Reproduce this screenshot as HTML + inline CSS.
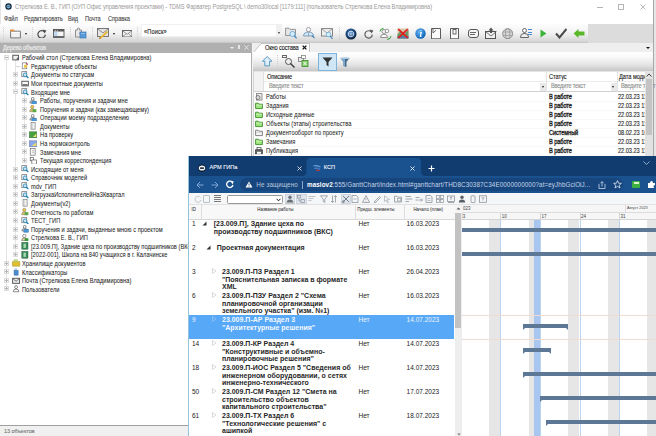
<!DOCTYPE html><html><head><meta charset="utf-8"><style>
*{margin:0;padding:0;box-sizing:border-box}
html,body{width:656px;height:436px;overflow:hidden;background:#fff;font-family:"Liberation Sans",sans-serif}
.ab{position:absolute}
.t{position:absolute;white-space:nowrap;line-height:1}
.ui{font-size:6.5px;letter-spacing:-0.04px;color:#222;-webkit-text-stroke:0.1px currentColor;transform:scaleX(0.87);transform-origin:0 0}
.g{font-size:7px;font-weight:bold;color:#262626;letter-spacing:0}
.gr{font-size:6.5px;color:#222}

</style></head><body>
<div class="ab" style="left:0;top:0;width:656px;height:13px;background:#fff"></div>
<svg class="ab" style="left:4.5px;top:3.2px" width="7" height="7"><circle cx="3.5" cy="3.5" r="3.2" fill="#0e2438"/><circle cx="3.5" cy="3.4" r="2" fill="#7aaed0"/><path d="M1.8 3.4H5.2" stroke="#1e4a6a" stroke-width="0.6"/></svg>
<div class="ab" style="left:0;top:0;width:1px;height:24px;background:#e4e4e4"></div>
<div class="t ui" style="left:14.8px;top:3.9px;color:#999999;-webkit-text-stroke:0;letter-spacing:-0.062px">Стрелкова Е. В., ГИП (ОУП Офис управления проектами) - TDMS Фарватер PostgreSQL \ demo30local [1179:111] (пользователь Стрелкова Елена Владимировна)</div>
<div class="ab" style="left:597px;top:6.5px;width:6px;height:1px;background:#b4b4b4"></div>
<div class="ab" style="left:618px;top:4px;width:6px;height:6px;border:1px solid #b4b4b4"></div>
<svg class="ab" style="left:640px;top:4px" width="6" height="6"><path d="M0.5 0.5L5.5 5.5M5.5 0.5L0.5 5.5" stroke="#b4b4b4" stroke-width="0.9"/></svg>
<div class="t ui" style="left:4.4px;top:16px;color:#444">Файл</div>
<div class="t ui" style="left:24.4px;top:16px;color:#444">Редактировать</div>
<div class="t ui" style="left:68.3px;top:16px;color:#444">Вид</div>
<div class="t ui" style="left:85.4px;top:16px;color:#444">Почта</div>
<div class="t ui" style="left:107.8px;top:16px;color:#444">Справка</div>
<div class="ab" style="left:0;top:23.6px;width:656px;height:19.4px;background:#dcdcdc"></div>
<div class="ab" style="left:0;top:23.6px;width:588px;height:19.4px;background:linear-gradient(#fdfdfd,#f2f2f2 50%,#d4d4d4);border-bottom:1px solid #c8c8c8"></div>
<div class="ab" style="left:2.8px;top:27px;width:1px;height:13px;border-left:1px dotted #d0d0d0"></div>
<div class="ab" style="left:32px;top:27px;width:1px;height:13px;border-left:1px dotted #d0d0d0"></div>
<div class="ab" style="left:70px;top:27px;width:1px;height:13px;border-left:1px dotted #d0d0d0"></div>
<div class="ab" style="left:91.5px;top:27px;width:1px;height:13px;border-left:1px dotted #d0d0d0"></div>
<div class="ab" style="left:137px;top:27px;width:1px;height:13px;border-left:1px dotted #d0d0d0"></div>
<div class="ab" style="left:338.6px;top:27px;width:1px;height:13px;border-left:1px dotted #d0d0d0"></div>
<div class="ab" style="left:141.2px;top:23.8px;width:140.5px;height:13px;background:#fff;border:1px solid #f0f0f0"></div>
<div class="t ui" style="left:143.6px;top:29.2px;color:#222;letter-spacing:0.15px">«Поиск»</div>
<div class="ab" style="left:276px;top:24.5px;width:6px;height:12px;background:#f0f0f0"></div>
<div class="ab" style="left:277.5px;top:32px;width:0;height:0;border-left:1.5px solid transparent;border-right:1.5px solid transparent;border-top:2px solid #333"></div>
<svg class="ab" style="left:9.5px;top:29px" width="11" height="9.5"><path d="M0.6 2.2H10.4V8.9H0.6z" fill="#f2f2f2" stroke="#6a6a6a" stroke-width="0.9"/><path d="M0.6 2.5V0.9H3.6L4.6 2.2" fill="#f0a050" stroke="#e08838" stroke-width="0.9"/><path d="M1 3.4H10" stroke="#fff" stroke-width="0.8"/></svg>
<div class="ab" style="left:24.9px;top:32.5px;width:0;height:0;border-left:1.5px solid transparent;border-right:1.5px solid transparent;border-top:2px solid #222"></div>
<svg class="ab" style="left:37px;top:28.8px" width="10" height="9.5"><path d="M7.6 3.2A3.7 3.7 0 1 0 8.3 5.6" fill="none" stroke="#4a4a4a" stroke-width="1.2"/><path d="M5.6 0.4L9.4 1.6L7.6 4.6z" fill="#4a4a4a"/></svg>
<svg class="ab" style="left:53px;top:29.2px" width="11.5" height="9"><rect x="0.5" y="0.5" width="10.5" height="8" fill="#f4f4f4" stroke="#555" stroke-width="0.9"/><rect x="0.5" y="0.5" width="10.5" height="2" fill="#555"/><rect x="1.3" y="2.5" width="3" height="5" fill="#b8d4ee"/><rect x="0.5" y="7" width="10.5" height="1.5" fill="#6a6a6a"/><path d="M2 1.5H3M4 1.5H5" stroke="#ddd" stroke-width="0.7"/></svg>
<svg class="ab" style="left:75px;top:27.3px" width="11.5" height="11.5"><path d="M0.5 3H2.5V1.5Q3.5 0.3 4.5 1.5V3H6.5V5.5H5Q4 6.5 5 7.5H6.5V10H0.5z" fill="#e8e8e8" stroke="#7a7a7a" stroke-width="0.8"/><rect x="5" y="5" width="6" height="6" fill="#5a9ad8" stroke="#3a78b8" stroke-width="0.7"/><path d="M6 6.5H10" stroke="#a8ccf0" stroke-width="0.7"/></svg>
<svg class="ab" style="left:96.5px;top:27.5px" width="12.5" height="11.5"><rect x="0.5" y="0.5" width="11" height="8" fill="#e4e4e4" stroke="#6a6a6a" stroke-width="0.9"/><path d="M0.8 0.8L6 5L11.2 0.8" fill="none" stroke="#777" stroke-width="0.8"/><path d="M2.5 10.8L10.5 3.5" stroke="#e8b830" stroke-width="1.8"/><path d="M2.5 10.8L3.3 9" stroke="#8a6a20" stroke-width="0.8"/></svg>
<div class="ab" style="left:112.7px;top:32.5px;width:0;height:0;border-left:1.5px solid transparent;border-right:1.5px solid transparent;border-top:2px solid #222"></div>
<svg class="ab" style="left:121.5px;top:29.7px" width="10.5" height="7.5"><rect x="0.5" y="0.5" width="9.5" height="6.5" fill="#f2f2f2" stroke="#5a5a5a" stroke-width="0.9"/><path d="M0.6 0.8L5.2 4.3L9.9 0.8M0.8 6.8L3.8 3.8M9.7 6.8L6.6 3.8" fill="none" stroke="#6a6a6a" stroke-width="0.7"/></svg>
<svg class="ab" style="left:284.5px;top:27px" width="13" height="12"><path d="M0.6 1.2H4L5 2.4H10.5V8.5H0.6z" fill="#e6e6e6" stroke="#8a8a8a" stroke-width="0.9"/><circle cx="7.5" cy="7" r="2.6" fill="#d4ecfa" stroke="#6aaad8" stroke-width="0.9"/><path d="M9.3 8.8L11.6 11.2" stroke="#4a88c0" stroke-width="1.3"/></svg>
<svg class="ab" style="left:303px;top:27px" width="13" height="12"><circle cx="5.5" cy="2.6" r="2.1" fill="#fafafa" stroke="#8a8a8a" stroke-width="0.8"/><path d="M0.6 9Q0.6 5 5.5 5Q10.4 5 10.4 9z" fill="#cfe6f6" stroke="#6a8aa8" stroke-width="0.8"/><path d="M5.5 5.5V9" stroke="#6a8aa8" stroke-width="0.6"/><path d="M9 8.5L11.5 11" stroke="#4a88c0" stroke-width="1.2"/></svg>
<svg class="ab" style="left:320.5px;top:27.5px" width="13" height="11.5"><rect x="0.5" y="0.6" width="11" height="7.5" fill="#eeeeee" stroke="#7a7a7a" stroke-width="0.9"/><path d="M0.8 0.9L6 5L11.2 0.9" fill="none" stroke="#8a8a8a" stroke-width="0.8"/><circle cx="7.5" cy="6.5" r="2.3" fill="#d4ecfa" stroke="#6aaad8" stroke-width="0.8"/><path d="M9.2 8.2L11.5 10.8" stroke="#4a88c0" stroke-width="1.2"/></svg>
<svg class="ab" style="left:344.5px;top:27.5px" width="12" height="12"><defs><radialGradient id="gd" cx="45%" cy="40%" r="60%"><stop offset="0" stop-color="#4a8ad0"/><stop offset="0.6" stop-color="#1a4a80"/><stop offset="1" stop-color="#0a1a30"/></radialGradient></defs><circle cx="6" cy="6" r="5.5" fill="url(#gd)"/><circle cx="6" cy="6" r="2.8" fill="none" stroke="#e8f0f8" stroke-width="0.8"/><path d="M3.2 6H8.8M6 3.2V8.8" stroke="#e8f0f8" stroke-width="0.6"/></svg>
<svg class="ab" style="left:363.5px;top:28.5px" width="10" height="10"><path d="M7.6 3.2A3.7 3.7 0 1 0 8.3 5.6" fill="none" stroke="#555" stroke-width="1.1"/><path d="M5.6 0.4L9.4 1.6L7.6 4.6z" fill="#555"/></svg>
<svg class="ab" style="left:379px;top:27.5px" width="13" height="12"><circle cx="5" cy="3.5" r="2" fill="#fafafa" stroke="#777" stroke-width="0.8"/><path d="M1.5 9.5Q1.5 6.2 5 6.2Q8.5 6.2 8.5 9.5z" fill="#fafafa" stroke="#777" stroke-width="0.8"/><circle cx="8" cy="3" r="1.8" fill="#fafafa" stroke="#777" stroke-width="0.7"/><path d="M1 3.5Q1 0.8 4 0.6" fill="none" stroke="#3aa03a" stroke-width="1"/><path d="M12 8Q12 11 8.5 11.3" fill="none" stroke="#3aa03a" stroke-width="1"/><path d="M3.5 0L5 0.7L3.6 1.6z" fill="#3aa03a"/><path d="M9.5 10.4L8 11.3L9.4 12z" fill="#3aa03a"/></svg>
<svg class="ab" style="left:396.5px;top:27.5px" width="12" height="11.5"><rect x="0.5" y="0.5" width="11" height="10" fill="#d8c8a8"/><path d="M0.5 6L4 3L7 6L11.5 2V10.5H0.5z" fill="#6a9a6a"/><path d="M0.5 8L11.5 8V10.5H0.5z" fill="#5a7aa8"/><path d="M1.2 1.2L10.8 9.8M10.8 1.2L1.2 9.8" stroke="#e02020" stroke-width="1.8"/></svg>
<svg class="ab" style="left:414.5px;top:27.8px" width="11" height="11"><defs><radialGradient id="gi" cx="40%" cy="35%" r="65%"><stop offset="0" stop-color="#6ab8f4"/><stop offset="1" stop-color="#0a62b8"/></radialGradient></defs><circle cx="5.5" cy="5.5" r="5.2" fill="url(#gi)"/><path d="M6 2.2V2.9M5.2 4.5H6.2L5.4 8.5H6.5" fill="none" stroke="#fff" stroke-width="1.2"/></svg>
<svg class="ab" style="left:431px;top:27.5px" width="10.5" height="11.5"><path d="M0.5 0.5H9.5V10.8H0.5z" fill="#fafafa" stroke="#4a4a4a" stroke-width="0.9"/><path d="M2 0.5V5L5 2.2" fill="none" stroke="#4a4a4a" stroke-width="0.8"/></svg>
<svg class="ab" style="left:449.5px;top:27.5px" width="9.5" height="11.5"><path d="M0.5 0.5H8.5V10.8H0.5z" fill="#fafafa" stroke="#4a4a4a" stroke-width="0.9"/><rect x="3" y="1.5" width="3" height="4.5" fill="#fff" stroke="#4a4a4a" stroke-width="0.8"/></svg>
<div class="ab" style="left:467.5px;top:29px;width:11px;height:9px;background:#f6f6f6;border:1px solid #555;border-radius:3px"></div>
<div class="ab" style="left:470px;top:32px;width:6px;height:1px;background:#666"></div><div class="ab" style="left:470px;top:34px;width:5px;height:1px;background:#666"></div>
<div class="ab" style="left:484.5px;top:31px;width:11px;height:8px;background:#f0f0f0;border:1px solid #555;border-radius:0px"></div>
<svg class="ab" style="left:484.5px;top:27px" width="12" height="12"><path d="M0.5 4.5L6 9L11.5 4.5" fill="none" stroke="#555" stroke-width="0.8"/><path d="M6 0.5L3.5 3.5H5V6H7V3.5H8.5z" fill="#555"/></svg>
<svg class="ab" style="left:502px;top:27.8px" width="11.5" height="11.5"><circle cx="5.7" cy="5.7" r="5" fill="#d8d8d8" stroke="#8a8a8a" stroke-width="0.9"/><ellipse cx="5.7" cy="5.7" rx="2.2" ry="5" fill="none" stroke="#8a8a8a" stroke-width="0.7"/><path d="M0.8 4H10.6M0.8 7.4H10.6" stroke="#8a8a8a" stroke-width="0.6"/></svg>
<div class="ab" style="left:522px;top:28px;width:5px;height:5px;border:1px solid #666;border-radius:50%;background:#fff"></div>
<div class="ab" style="left:520px;top:33px;width:9px;height:5px;border:1px solid #666;border-radius:4px 4px 0 0;background:#eee"></div>
<div class="ab" style="left:528px;top:29px;width:4px;height:8px;background:repeating-linear-gradient(#4a8ad0 0,#4a8ad0 1px,transparent 1px,transparent 2.5px)"></div>
<svg class="ab" style="left:540px;top:29px" width="7" height="9"><path d="M0.5 0.5L6.5 4.5L0.5 8.5z" fill="#3cb43c"/></svg>
<svg class="ab" style="left:555px;top:28px" width="12" height="11"><path d="M1 5.5L4.5 9.5L11.5 1" fill="none" stroke="#4a4a4a" stroke-width="2"/></svg>
<svg class="ab" style="left:572.5px;top:28px" width="12" height="11"><path d="M0.5 5.5L5.5 1V3.5H11.5V7.5H5.5V10z" fill="#58b82a"/></svg>
<div class="ab" style="left:0;top:43px;width:251.5px;height:9.5px;background:#b0b0b0"></div>
<div class="t ui" style="left:2.5px;top:44.6px;color:#f0f0f0;letter-spacing:-0.17px;-webkit-text-stroke:0.15px #f0f0f0">Дерево объектов</div>
<div class="ab" style="left:229.5px;top:46.5px;width:0;height:0;border-left:2px solid transparent;border-right:2px solid transparent;border-top:2.5px solid #eee"></div>
<div class="ab" style="left:238px;top:45px;width:2px;height:4px;border:1px solid #e6e6e6;border-top:none"></div>
<svg class="ab" style="left:244px;top:45px" width="5" height="5"><path d="M0.5 0.5L4.5 4.5M4.5 0.5L0.5 4.5" stroke="#eee" stroke-width="0.8"/></svg>
<div class="ab" style="left:0;top:425px;width:188px;height:11px;background:#f0f0f0;border-top:1px solid #a0a0a0"></div>
<div class="t ui" style="left:4px;top:428.5px;font-size:5.5px;color:#777;transform:none">13 объектов</div>
<div class="ab" style="left:5.8px;top:60px;width:1px;height:229px;background:#e4e4e4"></div>
<div class="ab" style="left:15.1px;top:60px;width:1px;height:194px;background:#e4e4e4"></div>
<div class="ab" style="left:24.4px;top:94px;width:1px;height:66px;background:#e6e6e6"></div>
<div class="ab" style="left:3.7px;top:55.1px;width:5px;height:5px;border:1px solid #dcdcdc;background:#f6f6f6"></div>
<div class="ab" style="left:4.7px;top:57.1px;width:3px;height:1px;background:#b4b4b4"></div>
<svg class="ab" style="left:12.4px;top:53.800000000000004px" width="8.2" height="7.6" viewBox="0 0 10 9" preserveAspectRatio="none"><rect x="1" y="1.5" width="7" height="5.5" fill="#f2f2f2" stroke="#505050" stroke-width="1.1"/><path d="M5 6.5L7.5 3.5V6.5z" fill="#505050"/></svg>
<div class="t ui" style="left:22px;top:55.25px;color:#202020;-webkit-text-stroke:0.04px #202020;letter-spacing:0.05px">Рабочий стол (Стрелкова Елена Владимировна)</div>
<div class="ab" style="left:15.3px;top:65.67px;width:5px;height:1px;background:#d8d8d8"></div>
<svg class="ab" style="left:20.500000000000004px;top:62.370000000000005px" width="8.2" height="7.6" viewBox="0 0 10 9" preserveAspectRatio="none"><rect x="1.5" y="1" width="5.5" height="7" fill="#fff" stroke="#777" stroke-width="0.8"/><circle cx="5.5" cy="5" r="2" fill="#e8c840"/><path d="M6 1L8.5 3" stroke="#b04070" stroke-width="1.2"/></svg>
<div class="t ui" style="left:31px;top:63.82px;color:#202020;-webkit-text-stroke:0.04px #202020;letter-spacing:0.05px">Редактируемые объекты</div>
<div class="ab" style="left:13.0px;top:72.24000000000001px;width:5px;height:5px;border:1px solid #dcdcdc;background:#f6f6f6"></div>
<div class="ab" style="left:14.0px;top:74.24000000000001px;width:3px;height:1px;background:#b4b4b4"></div>
<div class="ab" style="left:15.0px;top:73.24000000000001px;width:1px;height:3px;background:#b4b4b4"></div>
<svg class="ab" style="left:20.500000000000004px;top:70.94000000000001px" width="8.2" height="7.6" viewBox="0 0 10 9" preserveAspectRatio="none"><rect x="1" y="0.8" width="6" height="6" fill="#f4f4f4" stroke="#666" stroke-width="0.8"/><circle cx="5" cy="4.5" r="2.2" fill="#c8e4f4" stroke="#2a8ab8" stroke-width="1"/><path d="M6.5 6L9 8.5" stroke="#1a7aa8" stroke-width="1.5"/></svg>
<div class="t ui" style="left:31px;top:72.39000000000001px;color:#202020;-webkit-text-stroke:0.04px #202020;letter-spacing:0.05px">Документы по статусам</div>
<div class="ab" style="left:13.0px;top:80.81px;width:5px;height:5px;border:1px solid #dcdcdc;background:#f6f6f6"></div>
<div class="ab" style="left:14.0px;top:82.81px;width:3px;height:1px;background:#b4b4b4"></div>
<div class="ab" style="left:15.0px;top:81.81px;width:1px;height:3px;background:#b4b4b4"></div>
<svg class="ab" style="left:20.500000000000004px;top:79.51px" width="8.2" height="7.6" viewBox="0 0 10 9" preserveAspectRatio="none"><rect x="1" y="1.5" width="8" height="5.5" fill="#fafafa" stroke="#505050" stroke-width="1.1"/><rect x="2" y="5" width="6" height="1.5" fill="#505050"/></svg>
<div class="t ui" style="left:31px;top:80.96000000000001px;color:#202020;-webkit-text-stroke:0.04px #202020;letter-spacing:0.05px">Мои проектные документы</div>
<div class="ab" style="left:13.0px;top:89.38px;width:5px;height:5px;border:1px solid #dcdcdc;background:#f6f6f6"></div>
<div class="ab" style="left:14.0px;top:91.38px;width:3px;height:1px;background:#b4b4b4"></div>
<svg class="ab" style="left:20.500000000000004px;top:88.08px" width="8.2" height="7.6" viewBox="0 0 10 9" preserveAspectRatio="none"><rect x="1" y="0.8" width="6" height="6" fill="#f4f4f4" stroke="#666" stroke-width="0.8"/><circle cx="5" cy="4.5" r="2.2" fill="#c8e4f4" stroke="#2a8ab8" stroke-width="1"/><path d="M6.5 6L9 8.5" stroke="#1a7aa8" stroke-width="1.5"/></svg>
<div class="t ui" style="left:31px;top:89.53px;color:#202020;-webkit-text-stroke:0.04px #202020;letter-spacing:0.05px">Входящие мне</div>
<div class="ab" style="left:22.3px;top:97.95px;width:5px;height:5px;border:1px solid #dcdcdc;background:#f6f6f6"></div>
<div class="ab" style="left:23.3px;top:99.95px;width:3px;height:1px;background:#b4b4b4"></div>
<div class="ab" style="left:24.3px;top:98.95px;width:1px;height:3px;background:#b4b4b4"></div>
<svg class="ab" style="left:29.3px;top:96.65px" width="8.2" height="7.6" viewBox="0 0 10 9" preserveAspectRatio="none"><circle cx="4.5" cy="2.2" r="1.7" fill="#fff" stroke="#555" stroke-width="0.8"/><path d="M1 7Q1 4 4.5 4Q8 4 8 7z" fill="#fff" stroke="#555" stroke-width="0.8"/><rect x="3.5" y="5" width="5.5" height="3.5" fill="#4a9ad8" stroke="#2a6aa8" stroke-width="0.6"/></svg>
<div class="t ui" style="left:40px;top:98.10000000000001px;color:#202020;-webkit-text-stroke:0.04px #202020;letter-spacing:0.05px">Работы, поручения и задачи мне</div>
<div class="ab" style="left:22.3px;top:106.52000000000001px;width:5px;height:5px;border:1px solid #dcdcdc;background:#f6f6f6"></div>
<div class="ab" style="left:23.3px;top:108.52000000000001px;width:3px;height:1px;background:#b4b4b4"></div>
<div class="ab" style="left:24.3px;top:107.52000000000001px;width:1px;height:3px;background:#b4b4b4"></div>
<svg class="ab" style="left:29.3px;top:105.22000000000001px" width="8.2" height="7.6" viewBox="0 0 10 9" preserveAspectRatio="none"><circle cx="4" cy="2.3" r="2" fill="#f0c040" stroke="#777" stroke-width="0.6"/><path d="M0.8 8Q0.8 4.5 4 4.5Q7.5 4.5 7.5 8z" fill="#d8c060" stroke="#777" stroke-width="0.6"/><rect x="4.5" y="5" width="4.5" height="3.5" fill="#58a848"/></svg>
<div class="t ui" style="left:40px;top:106.67000000000002px;color:#202020;-webkit-text-stroke:0.04px #202020;letter-spacing:0.05px">Поручения и задачи (как замещающему)</div>
<div class="ab" style="left:22.3px;top:115.09px;width:5px;height:5px;border:1px solid #dcdcdc;background:#f6f6f6"></div>
<div class="ab" style="left:23.3px;top:117.09px;width:3px;height:1px;background:#b4b4b4"></div>
<div class="ab" style="left:24.3px;top:116.09px;width:1px;height:3px;background:#b4b4b4"></div>
<svg class="ab" style="left:29.3px;top:113.79px" width="8.2" height="7.6" viewBox="0 0 10 9" preserveAspectRatio="none"><circle cx="4.5" cy="2.2" r="1.7" fill="#fff" stroke="#555" stroke-width="0.8"/><path d="M1 7Q1 4 4.5 4Q8 4 8 7z" fill="#fff" stroke="#555" stroke-width="0.8"/><rect x="3.5" y="5" width="5.5" height="3.5" fill="#4a9ad8" stroke="#2a6aa8" stroke-width="0.6"/></svg>
<div class="t ui" style="left:40px;top:115.24000000000001px;color:#202020;-webkit-text-stroke:0.04px #202020;letter-spacing:0.05px">Операции моему подразделению</div>
<div class="ab" style="left:22.3px;top:123.66px;width:5px;height:5px;border:1px solid #dcdcdc;background:#f6f6f6"></div>
<div class="ab" style="left:23.3px;top:125.66px;width:3px;height:1px;background:#b4b4b4"></div>
<div class="ab" style="left:24.3px;top:124.66px;width:1px;height:3px;background:#b4b4b4"></div>
<svg class="ab" style="left:29.3px;top:122.36px" width="8.2" height="7.6" viewBox="0 0 10 9" preserveAspectRatio="none"><rect x="2.5" y="0.5" width="5" height="8" fill="#f0f0f0" stroke="#888" stroke-width="0.9"/><path d="M4 1V8" stroke="#bbb" stroke-width="0.6"/></svg>
<div class="t ui" style="left:40px;top:123.81px;color:#202020;-webkit-text-stroke:0.04px #202020;letter-spacing:0.05px">Документы</div>
<div class="ab" style="left:22.3px;top:132.23px;width:5px;height:5px;border:1px solid #dcdcdc;background:#f6f6f6"></div>
<div class="ab" style="left:23.3px;top:134.23px;width:3px;height:1px;background:#b4b4b4"></div>
<div class="ab" style="left:24.3px;top:133.23px;width:1px;height:3px;background:#b4b4b4"></div>
<svg class="ab" style="left:29.3px;top:130.92999999999998px" width="8.2" height="7.6" viewBox="0 0 10 9" preserveAspectRatio="none"><rect x="0.5" y="1" width="9" height="7" fill="#48a040" stroke="#2a6a2a" stroke-width="0.6"/><path d="M5 7L9 3V7z" fill="#e8e070"/></svg>
<div class="t ui" style="left:40px;top:132.38px;color:#202020;-webkit-text-stroke:0.04px #202020;letter-spacing:0.05px">На проверку</div>
<div class="ab" style="left:22.3px;top:140.8px;width:5px;height:5px;border:1px solid #dcdcdc;background:#f6f6f6"></div>
<div class="ab" style="left:23.3px;top:142.8px;width:3px;height:1px;background:#b4b4b4"></div>
<div class="ab" style="left:24.3px;top:141.8px;width:1px;height:3px;background:#b4b4b4"></div>
<svg class="ab" style="left:29.3px;top:139.5px" width="8.2" height="7.6" viewBox="0 0 10 9" preserveAspectRatio="none"><rect x="0.5" y="1" width="9" height="7" fill="#8aa8e8" stroke="#5a70a8" stroke-width="0.6"/><path d="M3 7L9 3V7z" fill="#e8d870"/></svg>
<div class="t ui" style="left:40px;top:140.95000000000002px;color:#202020;-webkit-text-stroke:0.04px #202020;letter-spacing:0.05px">На нормоконтроль</div>
<div class="ab" style="left:22.3px;top:149.37px;width:5px;height:5px;border:1px solid #dcdcdc;background:#f6f6f6"></div>
<div class="ab" style="left:23.3px;top:151.37px;width:3px;height:1px;background:#b4b4b4"></div>
<div class="ab" style="left:24.3px;top:150.37px;width:1px;height:3px;background:#b4b4b4"></div>
<svg class="ab" style="left:29.3px;top:148.07px" width="8.2" height="7.6" viewBox="0 0 10 9" preserveAspectRatio="none"><rect x="1.5" y="0.5" width="6" height="8" fill="#fafafa" stroke="#666" stroke-width="0.8"/><path d="M5 2.5V4M5 5V6" stroke="#555" stroke-width="0.9"/></svg>
<div class="t ui" style="left:40px;top:149.52px;color:#202020;-webkit-text-stroke:0.04px #202020;letter-spacing:0.05px">Замечания мне</div>
<div class="ab" style="left:22.3px;top:157.94px;width:5px;height:5px;border:1px solid #dcdcdc;background:#f6f6f6"></div>
<div class="ab" style="left:23.3px;top:159.94px;width:3px;height:1px;background:#b4b4b4"></div>
<div class="ab" style="left:24.3px;top:158.94px;width:1px;height:3px;background:#b4b4b4"></div>
<svg class="ab" style="left:29.3px;top:156.64px" width="8.2" height="7.6" viewBox="0 0 10 9" preserveAspectRatio="none"><rect x="1.5" y="0.5" width="4" height="4" fill="#fff" stroke="#555" stroke-width="0.8"/><rect x="3.5" y="3.5" width="5.5" height="5" fill="#fff" stroke="#555" stroke-width="0.8"/></svg>
<div class="t ui" style="left:40px;top:158.09px;color:#202020;-webkit-text-stroke:0.04px #202020;letter-spacing:0.05px">Текущая корреспонденция</div>
<div class="ab" style="left:13.0px;top:166.51px;width:5px;height:5px;border:1px solid #dcdcdc;background:#f6f6f6"></div>
<div class="ab" style="left:14.0px;top:168.51px;width:3px;height:1px;background:#b4b4b4"></div>
<div class="ab" style="left:15.0px;top:167.51px;width:1px;height:3px;background:#b4b4b4"></div>
<svg class="ab" style="left:20.500000000000004px;top:165.20999999999998px" width="8.2" height="7.6" viewBox="0 0 10 9" preserveAspectRatio="none"><rect x="1" y="0.8" width="6" height="6" fill="#f4f4f4" stroke="#666" stroke-width="0.8"/><circle cx="5" cy="4.5" r="2.2" fill="#c8e4f4" stroke="#2a8ab8" stroke-width="1"/><path d="M6.5 6L9 8.5" stroke="#1a7aa8" stroke-width="1.5"/></svg>
<div class="t ui" style="left:31px;top:166.66px;color:#202020;-webkit-text-stroke:0.04px #202020;letter-spacing:0.05px">Исходящие от меня</div>
<div class="ab" style="left:13.0px;top:175.08px;width:5px;height:5px;border:1px solid #dcdcdc;background:#f6f6f6"></div>
<div class="ab" style="left:14.0px;top:177.08px;width:3px;height:1px;background:#b4b4b4"></div>
<div class="ab" style="left:15.0px;top:176.08px;width:1px;height:3px;background:#b4b4b4"></div>
<svg class="ab" style="left:20.500000000000004px;top:173.78px" width="8.2" height="7.6" viewBox="0 0 10 9" preserveAspectRatio="none"><rect x="1" y="0.8" width="6" height="6" fill="#f4f4f4" stroke="#666" stroke-width="0.8"/><circle cx="5" cy="4.5" r="2.2" fill="#c8e4f4" stroke="#2a8ab8" stroke-width="1"/><path d="M6.5 6L9 8.5" stroke="#1a7aa8" stroke-width="1.5"/></svg>
<div class="t ui" style="left:31px;top:175.23000000000002px;color:#202020;-webkit-text-stroke:0.04px #202020;letter-spacing:0.05px">Справочник моделей</div>
<div class="ab" style="left:13.0px;top:183.65px;width:5px;height:5px;border:1px solid #dcdcdc;background:#f6f6f6"></div>
<div class="ab" style="left:14.0px;top:185.65px;width:3px;height:1px;background:#b4b4b4"></div>
<div class="ab" style="left:15.0px;top:184.65px;width:1px;height:3px;background:#b4b4b4"></div>
<svg class="ab" style="left:20.500000000000004px;top:182.35px" width="8.2" height="7.6" viewBox="0 0 10 9" preserveAspectRatio="none"><rect x="1" y="0.8" width="6" height="6" fill="#f4f4f4" stroke="#666" stroke-width="0.8"/><circle cx="5" cy="4.5" r="2.2" fill="#c8e4f4" stroke="#2a8ab8" stroke-width="1"/><path d="M6.5 6L9 8.5" stroke="#1a7aa8" stroke-width="1.5"/></svg>
<div class="t ui" style="left:31px;top:183.8px;color:#202020;-webkit-text-stroke:0.04px #202020;letter-spacing:0.05px">mdv_ГИП</div>
<div class="ab" style="left:13.0px;top:192.22px;width:5px;height:5px;border:1px solid #dcdcdc;background:#f6f6f6"></div>
<div class="ab" style="left:14.0px;top:194.22px;width:3px;height:1px;background:#b4b4b4"></div>
<div class="ab" style="left:15.0px;top:193.22px;width:1px;height:3px;background:#b4b4b4"></div>
<svg class="ab" style="left:20.500000000000004px;top:190.92px" width="8.2" height="7.6" viewBox="0 0 10 9" preserveAspectRatio="none"><rect x="1" y="0.8" width="6" height="6" fill="#f4f4f4" stroke="#666" stroke-width="0.8"/><circle cx="5" cy="4.5" r="2.2" fill="#c8e4f4" stroke="#2a8ab8" stroke-width="1"/><path d="M6.5 6L9 8.5" stroke="#1a7aa8" stroke-width="1.5"/></svg>
<div class="t ui" style="left:31px;top:192.37px;color:#202020;-webkit-text-stroke:0.04px #202020;letter-spacing:0.05px">ЗагрузкаИсполнителейНа3Квартал</div>
<div class="ab" style="left:13.0px;top:200.79px;width:5px;height:5px;border:1px solid #dcdcdc;background:#f6f6f6"></div>
<div class="ab" style="left:14.0px;top:202.79px;width:3px;height:1px;background:#b4b4b4"></div>
<div class="ab" style="left:15.0px;top:201.79px;width:1px;height:3px;background:#b4b4b4"></div>
<svg class="ab" style="left:20.500000000000004px;top:199.48999999999998px" width="8.2" height="7.6" viewBox="0 0 10 9" preserveAspectRatio="none"><rect x="2.5" y="0.5" width="5" height="8" fill="#f0f0f0" stroke="#888" stroke-width="0.9"/><path d="M4 1V8" stroke="#bbb" stroke-width="0.6"/></svg>
<div class="t ui" style="left:31px;top:200.94px;color:#202020;-webkit-text-stroke:0.04px #202020;letter-spacing:0.05px">Документы(v2)</div>
<div class="ab" style="left:13.0px;top:209.35999999999999px;width:5px;height:5px;border:1px solid #dcdcdc;background:#f6f6f6"></div>
<div class="ab" style="left:14.0px;top:211.35999999999999px;width:3px;height:1px;background:#b4b4b4"></div>
<div class="ab" style="left:15.0px;top:210.35999999999999px;width:1px;height:3px;background:#b4b4b4"></div>
<svg class="ab" style="left:20.500000000000004px;top:208.05999999999997px" width="8.2" height="7.6" viewBox="0 0 10 9" preserveAspectRatio="none"><circle cx="4" cy="2.3" r="2" fill="#f0c040" stroke="#777" stroke-width="0.6"/><path d="M0.8 8Q0.8 4.5 4 4.5Q7.5 4.5 7.5 8z" fill="#d8c060" stroke="#777" stroke-width="0.6"/><rect x="4.5" y="5" width="4.5" height="3.5" fill="#58a848"/></svg>
<div class="t ui" style="left:31px;top:209.51px;color:#202020;-webkit-text-stroke:0.04px #202020;letter-spacing:0.05px">Отчетность по работам</div>
<div class="ab" style="left:13.0px;top:217.93px;width:5px;height:5px;border:1px solid #dcdcdc;background:#f6f6f6"></div>
<div class="ab" style="left:14.0px;top:219.93px;width:3px;height:1px;background:#b4b4b4"></div>
<div class="ab" style="left:15.0px;top:218.93px;width:1px;height:3px;background:#b4b4b4"></div>
<svg class="ab" style="left:20.500000000000004px;top:216.63px" width="8.2" height="7.6" viewBox="0 0 10 9" preserveAspectRatio="none"><rect x="1" y="0.8" width="6" height="6" fill="#f4f4f4" stroke="#666" stroke-width="0.8"/><circle cx="5" cy="4.5" r="2.2" fill="#c8e4f4" stroke="#2a8ab8" stroke-width="1"/><path d="M6.5 6L9 8.5" stroke="#1a7aa8" stroke-width="1.5"/></svg>
<div class="t ui" style="left:31px;top:218.08px;color:#202020;-webkit-text-stroke:0.04px #202020;letter-spacing:0.05px">ТЕСТ_ГИП</div>
<div class="ab" style="left:13.0px;top:226.5px;width:5px;height:5px;border:1px solid #dcdcdc;background:#f6f6f6"></div>
<div class="ab" style="left:14.0px;top:228.5px;width:3px;height:1px;background:#b4b4b4"></div>
<div class="ab" style="left:15.0px;top:227.5px;width:1px;height:3px;background:#b4b4b4"></div>
<svg class="ab" style="left:20.500000000000004px;top:225.2px" width="8.2" height="7.6" viewBox="0 0 10 9" preserveAspectRatio="none"><circle cx="4.5" cy="2.2" r="1.7" fill="#fff" stroke="#555" stroke-width="0.8"/><path d="M1 7Q1 4 4.5 4Q8 4 8 7z" fill="#fff" stroke="#555" stroke-width="0.8"/><rect x="3.5" y="5" width="5.5" height="3.5" fill="#4a9ad8" stroke="#2a6aa8" stroke-width="0.6"/></svg>
<div class="t ui" style="left:31px;top:226.65px;color:#202020;-webkit-text-stroke:0.04px #202020;letter-spacing:0.05px">Поручения и задачи, выданные мною с проектом</div>
<div class="ab" style="left:13.0px;top:235.07px;width:5px;height:5px;border:1px solid #dcdcdc;background:#f6f6f6"></div>
<div class="ab" style="left:14.0px;top:237.07px;width:3px;height:1px;background:#b4b4b4"></div>
<div class="ab" style="left:15.0px;top:236.07px;width:1px;height:3px;background:#b4b4b4"></div>
<svg class="ab" style="left:20.500000000000004px;top:233.76999999999998px" width="8.2" height="7.6" viewBox="0 0 10 9" preserveAspectRatio="none"><circle cx="4" cy="2.3" r="2" fill="#fff" stroke="#555" stroke-width="0.7"/><path d="M0.8 8Q0.8 4.5 4 4.5Q7.5 4.5 7.5 8z" fill="#e8d8a0" stroke="#555" stroke-width="0.7"/><rect x="4.5" y="5" width="4.5" height="3.5" fill="#3a9a3a"/></svg>
<div class="t ui" style="left:31px;top:235.22px;color:#202020;-webkit-text-stroke:0.04px #202020;letter-spacing:0.05px">Стрелкова Е. В., ГИП</div>
<div class="ab" style="left:13.0px;top:243.64000000000001px;width:5px;height:5px;border:1px solid #dcdcdc;background:#f6f6f6"></div>
<div class="ab" style="left:14.0px;top:245.64000000000001px;width:3px;height:1px;background:#b4b4b4"></div>
<div class="ab" style="left:15.0px;top:244.64000000000001px;width:1px;height:3px;background:#b4b4b4"></div>
<svg class="ab" style="left:20.500000000000004px;top:242.34px" width="8.2" height="7.6" viewBox="0 0 10 9" preserveAspectRatio="none"><rect x="1" y="0.5" width="7.5" height="8" fill="#3a8a5a" stroke="#1a5a3a" stroke-width="0.6"/><rect x="3" y="2" width="3" height="5" fill="#a8d8b0"/></svg>
<div class="t ui" style="left:31px;top:243.79000000000002px;color:#202020;-webkit-text-stroke:0.04px #202020;letter-spacing:0.05px">[23.009.П], Здание цеха по производству подшипников (ВКС)</div>
<div class="ab" style="left:13.0px;top:252.21px;width:5px;height:5px;border:1px solid #dcdcdc;background:#f6f6f6"></div>
<div class="ab" style="left:14.0px;top:254.21px;width:3px;height:1px;background:#b4b4b4"></div>
<div class="ab" style="left:15.0px;top:253.21px;width:1px;height:3px;background:#b4b4b4"></div>
<svg class="ab" style="left:20.500000000000004px;top:250.91px" width="8.2" height="7.6" viewBox="0 0 10 9" preserveAspectRatio="none"><rect x="1" y="0.5" width="7.5" height="8" fill="#3a8a5a" stroke="#1a5a3a" stroke-width="0.6"/><rect x="3" y="2" width="3" height="5" fill="#a8d8b0"/></svg>
<div class="t ui" style="left:31px;top:252.36px;color:#202020;-webkit-text-stroke:0.04px #202020;letter-spacing:0.05px">[2022-001], Школа на 840 учащихся в г. Калачинске</div>
<div class="ab" style="left:3.7px;top:260.78000000000003px;width:5px;height:5px;border:1px solid #dcdcdc;background:#f6f6f6"></div>
<div class="ab" style="left:4.7px;top:262.78000000000003px;width:3px;height:1px;background:#b4b4b4"></div>
<div class="ab" style="left:5.7px;top:261.78000000000003px;width:1px;height:3px;background:#b4b4b4"></div>
<svg class="ab" style="left:12.4px;top:259.48px" width="8.2" height="7.6" viewBox="0 0 10 9" preserveAspectRatio="none"><path d="M0.5 3H9.5V8.5H0.5z" fill="#e0c030" stroke="#a08a20" stroke-width="0.6"/><rect x="2" y="0.5" width="5" height="3" fill="#b8d070"/></svg>
<div class="t ui" style="left:22px;top:260.93px;color:#202020;-webkit-text-stroke:0.04px #202020;letter-spacing:0.05px">Хранилище документов</div>
<div class="ab" style="left:3.7px;top:269.35px;width:5px;height:5px;border:1px solid #dcdcdc;background:#f6f6f6"></div>
<div class="ab" style="left:4.7px;top:271.35px;width:3px;height:1px;background:#b4b4b4"></div>
<div class="ab" style="left:5.7px;top:270.35px;width:1px;height:3px;background:#b4b4b4"></div>
<svg class="ab" style="left:12.4px;top:268.05px" width="8.2" height="7.6" viewBox="0 0 10 9" preserveAspectRatio="none"><rect x="3" y="0.5" width="3" height="3" fill="#b0c8e0"/><rect x="2.5" y="3" width="5" height="5.5" fill="#4a8ad0" stroke="#3a6aa0" stroke-width="0.6"/></svg>
<div class="t ui" style="left:22px;top:269.5px;color:#202020;-webkit-text-stroke:0.04px #202020;letter-spacing:0.05px">Классификаторы</div>
<div class="ab" style="left:3.7px;top:277.92px;width:5px;height:5px;border:1px solid #dcdcdc;background:#f6f6f6"></div>
<div class="ab" style="left:4.7px;top:279.92px;width:3px;height:1px;background:#b4b4b4"></div>
<div class="ab" style="left:5.7px;top:278.92px;width:1px;height:3px;background:#b4b4b4"></div>
<svg class="ab" style="left:12.4px;top:276.62px" width="8.2" height="7.6" viewBox="0 0 10 9" preserveAspectRatio="none"><rect x="0.8" y="1.5" width="8.5" height="6" fill="#e8e8e8" stroke="#444" stroke-width="1"/><path d="M1 2L5 5L9 2" fill="none" stroke="#444" stroke-width="0.8"/></svg>
<div class="t ui" style="left:22px;top:278.07px;color:#202020;-webkit-text-stroke:0.04px #202020;letter-spacing:0.05px">Почта (Стрелкова Елена Владимировна)</div>
<div class="ab" style="left:3.7px;top:286.49px;width:5px;height:5px;border:1px solid #dcdcdc;background:#f6f6f6"></div>
<div class="ab" style="left:4.7px;top:288.49px;width:3px;height:1px;background:#b4b4b4"></div>
<div class="ab" style="left:5.7px;top:287.49px;width:1px;height:3px;background:#b4b4b4"></div>
<svg class="ab" style="left:12.4px;top:285.19px" width="8.2" height="7.6" viewBox="0 0 10 9" preserveAspectRatio="none"><circle cx="5" cy="2.5" r="1.8" fill="#fff" stroke="#555" stroke-width="0.8"/><path d="M1.5 8Q1.5 4.8 5 4.8Q8.5 4.8 8.5 8z" fill="#fff" stroke="#555" stroke-width="0.8"/></svg>
<div class="t ui" style="left:22px;top:286.64px;color:#202020;-webkit-text-stroke:0.04px #202020;letter-spacing:0.05px">Пользователи</div>
<div class="ab" style="left:251.5px;top:43px;width:1.5px;height:393px;background:#f4f4f4"></div>
<div class="ab" style="left:253px;top:43px;width:403px;height:9px;background:#eeeeee"></div>
<div class="ab" style="left:652.8px;top:0px;width:1.8px;height:436px;background:#a8a8a8"></div>
<div class="ab" style="left:654px;top:0;width:2px;height:436px;background:#e6e6e6"></div>
<div class="ab" style="left:646px;top:46.5px;width:0;height:0;border-left:2px solid transparent;border-right:2px solid transparent;border-top:2.2px solid #111"></div>
<svg class="ab" style="left:253px;top:42.5px" width="58" height="10"><path d="M0.5 9.5L8 0.5H56.5V9.5" fill="#fff" stroke="#b8b8b8" stroke-width="0.8"/></svg>
<div class="t ui" style="left:265px;top:44.8px;color:#111;letter-spacing:-0.176px;-webkit-text-stroke:0.1px #111">Окно состава</div>
<svg class="ab" style="left:301.8px;top:45.2px" width="5" height="5"><path d="M0.6 0.6L4.4 4.4M4.4 0.6L0.6 4.4" stroke="#111" stroke-width="1.3"/></svg>
<div class="ab" style="left:253px;top:52px;width:400px;height:18.8px;background:linear-gradient(#ffffff,#fafafa 25%,#e2e2e2 70%,#c6c6c6)"></div>
<svg class="ab" style="left:261.5px;top:56px" width="10.5" height="10.5"><path d="M5.2 0.6L9.9 5.2H7.6V9.8H2.8V5.2H0.5z" fill="#dff0fa" stroke="#4a90c0" stroke-width="0.9"/></svg>
<div class="ab" style="left:277px;top:55px;width:1px;height:13px;border-left:1px dotted #d0d0d0"></div>
<div class="ab" style="left:282px;top:54.5px;width:5px;height:3.5px;background:#fff;border:1px solid #666;border-radius:0px"></div>
<div class="ab" style="left:284.5px;top:58px;width:7px;height:7px;border:1.3px solid #555;border-radius:50%;background:#eee"></div>
<svg class="ab" style="left:290px;top:63px" width="5" height="5"><path d="M0.5 0.5L4.5 4.5" stroke="#333" stroke-width="1.3"/></svg>
<svg class="ab" style="left:298px;top:54.5px" width="11" height="12"><rect x="0.5" y="2.5" width="5" height="4" fill="#eee" stroke="#777" stroke-width="0.8"/><rect x="3.5" y="0.5" width="4" height="3" fill="#fff" stroke="#777" stroke-width="0.7"/><rect x="4" y="5.5" width="6" height="6" fill="#8ad070" stroke="#3a8a2a" stroke-width="0.8"/><path d="M5.5 7L8.5 10M8.5 7L5.5 10" stroke="#fff" stroke-width="0.9"/></svg>
<div class="ab" style="left:318px;top:52.5px;width:18.5px;height:18px;background:#cfe6f7;border:1px solid #7eb4dc"></div>
<svg class="ab" style="left:322px;top:57px" width="11" height="10"><path d="M0.5 0.5H10.5L6.5 5V9.5L4.5 8V5z" fill="#333"/></svg>
<svg class="ab" style="left:339.5px;top:56.5px" width="10" height="11"><path d="M0.5 1H9.5L6.5 5V10L3.5 9V5z" fill="#4a6a8a"/><path d="M0.5 1H5V9.5L3.5 9V5z" fill="#7aa8d0"/><ellipse cx="5" cy="1.2" rx="4.5" ry="0.9" fill="#a8c8e0"/></svg>
<div class="ab" style="left:253px;top:70.8px;width:400px;height:365.2px;background:#fff;border-top:1px solid #e4e4e4"></div>
<div class="ab" style="left:254px;top:72px;width:10px;height:19.5px;background:#f2f2f2;border-right:1px solid #e0e0e0"></div>
<div class="t ui" style="left:266.5px;top:73.8px;color:#222;letter-spacing:-0.13px;-webkit-text-stroke:0.12px #222">Описание</div>
<div class="t ui" style="left:268.5px;top:82.9px;color:#8a8a8a;letter-spacing:-0.24px">Введите текст</div>
<div class="t ui" style="left:549px;top:73.8px;color:#222;-webkit-text-stroke:0.12px #222">Статус</div>
<div class="t ui" style="left:551px;top:82.9px;color:#8a8a8a;letter-spacing:-0.24px">Введите текст</div>
<div class="t ui" style="left:618.5px;top:73.8px;color:#222;-webkit-text-stroke:0.12px #222">Дата модиф</div>
<div class="t ui" style="left:621px;top:82.9px;color:#8a8a8a;letter-spacing:-0.24px">Введите текст</div>
<div class="ab" style="left:264px;top:80.6px;width:381px;height:0;border-top:1px solid #ececec"></div>
<div class="ab" style="left:253px;top:91.2px;width:392px;height:0;border-top:1px solid #d0d0d0"></div>
<div class="ab" style="left:546px;top:72px;width:1px;height:19.5px;background:#e4e4e4"></div>
<div class="ab" style="left:540px;top:82.5px;width:6px;height:8px;background:#e8e8e8"></div>
<div class="ab" style="left:541.5px;top:86px;width:0;height:0;border-left:1.5px solid transparent;border-right:1.5px solid transparent;border-top:2px solid #222"></div>
<div class="ab" style="left:616.5px;top:72px;width:1px;height:19.5px;background:#e4e4e4"></div>
<div class="ab" style="left:610.5px;top:82.5px;width:6px;height:8px;background:#e8e8e8"></div>
<div class="ab" style="left:612.0px;top:86px;width:0;height:0;border-left:1.5px solid transparent;border-right:1.5px solid transparent;border-top:2px solid #222"></div>
<svg class="ab" style="left:255.3px;top:93.0px" width="8" height="7.5"><rect x="1.5" y="0.6" width="5.5" height="6.5" fill="#eee" stroke="#777" stroke-width="0.8"/><circle cx="3" cy="4.5" r="2" fill="#ddd" stroke="#666" stroke-width="0.8"/></svg>
<div class="t ui" style="left:266px;top:93.75px;color:#202020;-webkit-text-stroke:0.04px #202020;letter-spacing:0.06px">Работы</div>
<div class="t ui" style="left:548.6px;top:94.14999999999999px;letter-spacing:-0.1px;-webkit-text-stroke:0.32px #1e1e1e;color:#1e1e1e">В работе</div>
<div class="t ui" style="left:618px;top:93.75px;color:#1e1e1e">22.03.23 11</div>
<div class="ab" style="left:264px;top:100.89999999999999px;width:381px;height:0;border-top:1px solid #f8f8f8"></div>
<svg class="ab" style="left:255.3px;top:102.05px" width="8" height="7.5"><path d="M0.6 1.2H3.2L4 2.2H7.4V6.6H0.6z" fill="#9ce67a" stroke="#3c8a2c" stroke-width="0.9"/><path d="M1 3.2H7" stroke="#d8f6c8" stroke-width="0.8"/></svg>
<div class="t ui" style="left:266px;top:102.8px;color:#202020;-webkit-text-stroke:0.04px #202020;letter-spacing:0.06px">Задания</div>
<div class="t ui" style="left:548.6px;top:103.19999999999999px;letter-spacing:-0.1px;-webkit-text-stroke:0.32px #1e1e1e;color:#1e1e1e">В работе</div>
<div class="t ui" style="left:618px;top:102.8px;color:#1e1e1e">22.03.23 11</div>
<div class="ab" style="left:264px;top:109.94999999999999px;width:381px;height:0;border-top:1px solid #f8f8f8"></div>
<svg class="ab" style="left:255.3px;top:111.1px" width="8" height="7.5"><path d="M0.6 1.2H3.2L4 2.2H7.4V6.6H0.6z" fill="#9ce67a" stroke="#3c8a2c" stroke-width="0.9"/><path d="M1 3.2H7" stroke="#d8f6c8" stroke-width="0.8"/></svg>
<div class="t ui" style="left:266px;top:111.85px;color:#202020;-webkit-text-stroke:0.04px #202020;letter-spacing:0.06px">Исходные данные</div>
<div class="t ui" style="left:548.6px;top:112.24999999999999px;letter-spacing:-0.1px;-webkit-text-stroke:0.32px #1e1e1e;color:#1e1e1e">В работе</div>
<div class="t ui" style="left:618px;top:111.85px;color:#1e1e1e">22.03.23 11</div>
<div class="ab" style="left:264px;top:118.99999999999999px;width:381px;height:0;border-top:1px solid #f8f8f8"></div>
<svg class="ab" style="left:255.3px;top:120.15px" width="8" height="7.5"><path d="M0.6 1.2H3.2L4 2.2H7.4V6.6H0.6z" fill="#9ce67a" stroke="#3c8a2c" stroke-width="0.9"/><path d="M1 3.2H7" stroke="#d8f6c8" stroke-width="0.8"/></svg>
<div class="t ui" style="left:266px;top:120.9px;color:#202020;-webkit-text-stroke:0.04px #202020;letter-spacing:0.06px">Объекты (этапы) строительства</div>
<div class="t ui" style="left:548.6px;top:121.3px;letter-spacing:-0.1px;-webkit-text-stroke:0.32px #1e1e1e;color:#1e1e1e">В работе</div>
<div class="t ui" style="left:618px;top:120.9px;color:#1e1e1e">22.03.23 11</div>
<div class="ab" style="left:264px;top:128.05px;width:381px;height:0;border-top:1px solid #f8f8f8"></div>
<svg class="ab" style="left:255.3px;top:129.20000000000002px" width="8" height="7.5"><path d="M0.6 1.2H3.2L4 2.2H7.4V6.6H0.6z" fill="#f4f4f4" stroke="#777" stroke-width="0.9"/><path d="M1 3.2H7" stroke="#bbb" stroke-width="0.6"/></svg>
<div class="t ui" style="left:266px;top:129.95000000000002px;color:#202020;-webkit-text-stroke:0.04px #202020;letter-spacing:0.06px">Документооборот по проекту</div>
<div class="t ui" style="left:548.6px;top:130.35000000000002px;letter-spacing:-0.1px;-webkit-text-stroke:0.32px #1e1e1e;color:#1e1e1e">Системный</div>
<div class="t ui" style="left:618px;top:129.95000000000002px;color:#1e1e1e">08.02.23 10</div>
<div class="ab" style="left:264px;top:137.10000000000002px;width:381px;height:0;border-top:1px solid #f8f8f8"></div>
<svg class="ab" style="left:255.3px;top:138.25px" width="8" height="7.5"><path d="M0.6 1.2H3.2L4 2.2H7.4V6.6H0.6z" fill="#9ce67a" stroke="#3c8a2c" stroke-width="0.9"/><path d="M1 3.2H7" stroke="#d8f6c8" stroke-width="0.8"/></svg>
<div class="t ui" style="left:266px;top:139.0px;color:#202020;-webkit-text-stroke:0.04px #202020;letter-spacing:0.06px">Замечания</div>
<div class="t ui" style="left:548.6px;top:139.4px;letter-spacing:-0.1px;-webkit-text-stroke:0.32px #1e1e1e;color:#1e1e1e">В работе</div>
<div class="t ui" style="left:618px;top:139.0px;color:#1e1e1e">22.03.23 11</div>
<div class="ab" style="left:264px;top:146.15px;width:381px;height:0;border-top:1px solid #f8f8f8"></div>
<svg class="ab" style="left:255.3px;top:147.3px" width="8" height="7.5"><rect x="2" y="0.5" width="4" height="2.5" fill="#fff" stroke="#444" stroke-width="0.7"/><rect x="0.6" y="2.8" width="6.8" height="4" fill="#666" stroke="#333" stroke-width="0.7"/><rect x="2" y="4.8" width="4" height="2" fill="#fff"/></svg>
<div class="t ui" style="left:266px;top:148.05px;color:#202020;-webkit-text-stroke:0.04px #202020;letter-spacing:0.06px">Публикация</div>
<div class="t ui" style="left:548.6px;top:148.45000000000002px;letter-spacing:-0.1px;-webkit-text-stroke:0.32px #1e1e1e;color:#1e1e1e">В работе</div>
<div class="t ui" style="left:618px;top:148.05px;color:#1e1e1e">22.03.23 11</div>
<div class="ab" style="left:264px;top:155.20000000000002px;width:381px;height:0;border-top:1px solid #f8f8f8"></div>
<div class="ab" style="left:250.8px;top:52.5px;width:0.9px;height:384px;background:#b0b0b0"></div>
<div class="ab" style="left:253px;top:70.8px;width:0.9px;height:366px;background:#d4d4d4"></div>
<div class="ab" style="left:645px;top:71.5px;width:7.5px;height:365px;background:#e2e2e2"></div>
<div class="ab" style="left:645.5px;top:78.5px;width:6.5px;height:56px;background:#c4c4c4"></div>
<svg class="ab" style="left:646px;top:73px" width="6" height="4"><path d="M0.5 3.5L3 1L5.5 3.5" fill="none" stroke="#333" stroke-width="0.9"/></svg><div class="ab" style="left:188px;top:155.5px;width:468px;height:281px;background:#fff;border-left:1px solid #94c4dc"></div>
<div class="ab" style="left:189px;top:155.5px;width:467px;height:20px;background:#103c70"></div>
<svg class="ab" style="left:197.5px;top:163.5px" width="8" height="8"><circle cx="4" cy="4.2" r="3.6" fill="#0a1a2a"/><ellipse cx="4" cy="4" rx="3.2" ry="2.6" fill="#f4f6fa"/><rect x="2" y="3.2" width="4" height="1.8" rx="0.6" fill="#2a3a4a"/></svg>
<div class="t" style="left:209.6px;top:165.3px;font-size:5.6px;color:#f4f6fa;-webkit-text-stroke:0.1px #f4f6fa">АРМ ГИПа</div>
<svg class="ab" style="left:296.5px;top:165.5px" width="5" height="5"><path d="M0.5 0.5L4.5 4.5M4.5 0.5L0.5 4.5" stroke="#dde" stroke-width="0.9"/></svg>
<svg class="ab" style="left:301.5px;top:158.2px" width="125" height="18"><path d="M0 18Q4.5 18 4.5 13.5V4Q4.5 0 8.5 0H115Q119 0 119 4V13.5Q119 18 124 18z" fill="#1a528f"/></svg>
<svg class="ab" style="left:312.5px;top:164px" width="8" height="7"><path d="M0.5 2Q3 1 7.5 3" fill="none" stroke="#6aa0e0" stroke-width="1.1"/><path d="M1 4.5Q4 3.5 7 5.5" fill="none" stroke="#4a80c8" stroke-width="1.1"/><path d="M3 6.2L6.5 6.5" stroke="#e03030" stroke-width="1"/></svg>
<div class="t" style="left:323.8px;top:165.3px;font-size:5.6px;color:#f4f6fa;-webkit-text-stroke:0.1px #f4f6fa">КСП</div>
<svg class="ab" style="left:410px;top:165.5px" width="5" height="5"><path d="M0.5 0.5L4.5 4.5M4.5 0.5L0.5 4.5" stroke="#eef" stroke-width="0.9"/></svg>
<svg class="ab" style="left:427.5px;top:164.5px" width="7" height="7"><path d="M3.5 0.5V6.5M0.5 3.5H6.5" stroke="#fff" stroke-width="1.2"/></svg>
<svg class="ab" style="left:643px;top:160.5px" width="7" height="4"><path d="M0.5 0.5L3.5 3.5L6.5 0.5" fill="none" stroke="#9ab4d4" stroke-width="0.9"/></svg>
<div class="ab" style="left:189px;top:175.5px;width:467px;height:17.5px;background:#1a528f"></div>
<svg class="ab" style="left:195.5px;top:180.5px" width="8" height="8"><path d="M7.5 4H1M4 1L1 4L4 7" fill="none" stroke="#7fa6d6" stroke-width="1"/></svg>
<svg class="ab" style="left:211px;top:180.5px" width="8" height="8"><path d="M0.5 4H7M4 1L7 4L4 7" fill="none" stroke="#7fa6d6" stroke-width="1"/></svg>
<svg class="ab" style="left:225.5px;top:180px" width="8" height="9"><path d="M6.5 2.5A3.2 3.2 0 1 0 7 5" fill="none" stroke="#fff" stroke-width="1.3"/><path d="M4.5 0.5L7.8 1.5L6.5 4.5z" fill="#fff"/></svg>
<div class="ab" style="left:240px;top:178px;width:383px;height:13px;border-radius:6.5px;background:#17467e"></div>
<svg class="ab" style="left:245px;top:180.5px" width="8" height="7"><path d="M4 0.5L7.5 6.5H0.5z" fill="#fff"/><path d="M4 2.5V4.5M4 5.3V5.9" stroke="#133f70" stroke-width="0.9"/></svg>
<div class="t" style="left:256.3px;top:181.5px;font-size:6.3px;letter-spacing:0.1px;color:#b8c8dc">Не защищено</div>
<div class="ab" style="left:302.3px;top:180.5px;width:1px;height:8px;background:#8aa6c8"></div>
<div class="t" style="left:307px;top:181.5px;font-size:6.3px;letter-spacing:0.08px;color:#c4d4e8"><span style="color:#fff;font-weight:bold">maslov2</span>:555/GanttChart/index.html#ganttchart/THD8C30387C34E0000000000?at=eyJhbGciOiJ...</div>
<svg class="ab" style="left:598px;top:180.5px" width="8" height="8"><path d="M1 3V7.5H7V3M4 5.5V0.8M2.3 2.3L4 0.6L5.7 2.3" fill="none" stroke="#c8d8ea" stroke-width="0.8"/></svg>
<svg class="ab" style="left:613px;top:180px" width="9" height="9"><path d="M4.5 0.6L5.6 3.2L8.4 3.4L6.2 5.2L7 8L4.5 6.4L2 8L2.8 5.2L0.6 3.4L3.4 3.2z" fill="none" stroke="#e0e8f2" stroke-width="0.8"/></svg>
<div class="ab" style="left:632px;top:180.5px;width:8px;height:7px;background:#3cb040;border-radius:1px"></div>
<div class="ab" style="left:633.5px;top:182px;width:5px;height:2px;background:#dff5d0"></div>
<svg class="ab" style="left:647px;top:179.5px" width="9" height="9"><path d="M1 3H3Q3 1 4.5 1Q6 1 6 3H8V5Q6.5 5 6.5 6.5Q6.5 8 8 8H1z" fill="#fff"/></svg>
<div class="ab" style="left:189px;top:193px;width:467px;height:12px;background:#f5f6f7;border-bottom:1px solid #e2e2e2"></div>
<svg class="ab" style="left:193.5px;top:195px" width="8" height="8"><path d="M6.5 2.5A3 3 0 1 0 7 5" fill="none" stroke="#b8c0c8" stroke-width="0.9"/></svg>
<div class="ab" style="left:203px;top:195px;width:7px;height:8px;border:1px solid #b8c0c8;border-radius:1px"></div>
<div class="ab" style="left:214px;top:195px;width:7px;height:8px;background:repeating-linear-gradient(#7a7a7a 0,#7a7a7a 1px,transparent 1px,transparent 2px)"></div>
<div class="ab" style="left:226.5px;top:194.5px;width:56.5px;height:9px;background:#fff;border:1px solid #9a9a9a;border-radius:1.5px"></div>
<svg class="ab" style="left:276px;top:197.5px" width="5" height="4"><path d="M0.5 0.8L2.5 2.8L4.5 0.8" fill="none" stroke="#111" stroke-width="1"/></svg>
<div class="ab" style="left:284.6px;top:193.6px;width:10.899999999999977px;height:10.5px;background:#dfe5ec;border:1px solid #cdd4dc"></div>
<div class="ab" style="left:295.8px;top:193.6px;width:10.899999999999977px;height:10.5px;background:#dfe5ec;border:1px solid #cdd4dc"></div>
<div class="ab" style="left:340.5px;top:193.6px;width:10.0px;height:10.5px;background:#dfe5ec;border:1px solid #cdd4dc"></div>
<svg class="ab" style="left:286px;top:195px" width="8" height="8.5"><circle cx="4" cy="2.3" r="1.7" fill="#6a7078"/><path d="M0.8 7.5Q0.8 4.6 4 4.6Q7.2 4.6 7.2 7.5z" fill="#6a7078"/><path d="M0 8H8" stroke="#aaa" stroke-width="0.6"/></svg>
<svg class="ab" style="left:297.2px;top:195px" width="8" height="8.5"><rect x="0.5" y="0.5" width="3" height="2.5" fill="none" stroke="#8c949c" stroke-width="0.7"/><rect x="4" y="4.5" width="3.5" height="3" fill="none" stroke="#8c949c" stroke-width="0.7"/><path d="M2 3V6H4" fill="none" stroke="#8c949c" stroke-width="0.7"/></svg>
<svg class="ab" style="left:308px;top:195px" width="8" height="8.5"><path d="M0.5 1.5H7.5M0.5 3.5H5.5M0.5 5.5H3.5" stroke="#b0b6bc" stroke-width="0.8"/></svg>
<svg class="ab" style="left:319.5px;top:195px" width="8" height="8.5"><path d="M0.5 0.8H7.5L4.8 4.2V7.5L3.2 6.5V4.2z" fill="none" stroke="#8c949c" stroke-width="0.8"/></svg>
<svg class="ab" style="left:330px;top:195px" width="8" height="8.5"><path d="M2.5 0.5V7.5M1 6L2.5 7.5L4 6M5.5 7.5V0.5M4 2L5.5 0.5L7 2" fill="none" stroke="#8c949c" stroke-width="0.8"/></svg>
<svg class="ab" style="left:341.5px;top:195px" width="8" height="8.5"><path d="M1 1L7 7M7 1L1 7" stroke="#6a7480" stroke-width="0.9"/><circle cx="1.3" cy="6.7" r="1" fill="none" stroke="#6a7480" stroke-width="0.7"/></svg>
<svg class="ab" style="left:351px;top:195px" width="8" height="8.5"><path d="M1 0.5H5.5L7 2V7.5H1z" fill="none" stroke="#8c949c" stroke-width="0.8"/><path d="M2.5 4H5.5" stroke="#8c949c" stroke-width="0.7"/></svg>
<svg class="ab" style="left:361.5px;top:195px" width="8" height="8.5"><path d="M4 0.6L7.6 7.4H0.4z" fill="none" stroke="#8c949c" stroke-width="0.8"/><path d="M4 3V5.2M4 6V6.6" stroke="#8c949c" stroke-width="0.7"/></svg>
<svg class="ab" style="left:372.9px;top:195px" width="8" height="8.5"><path d="M1 7L6.5 1.5L7.5 2.5L2 8z" fill="none" stroke="#8c949c" stroke-width="0.8"/></svg>
<svg class="ab" style="left:383.4px;top:195px" width="8" height="8.5"><path d="M1.5 0.8L6.5 4.5L4.2 4.8L5.5 7.5L4.5 7.8L3.3 5.2L1.5 6.5z" fill="none" stroke="#a8aeb4" stroke-width="0.7"/></svg>
<svg class="ab" style="left:393.7px;top:195px" width="8" height="8.5"><path d="M0.5 1.2H3L3.8 2.2H7.5V7H0.5z" fill="none" stroke="#8c949c" stroke-width="0.8"/><rect x="3.5" y="3.5" width="3" height="2.5" fill="none" stroke="#8c949c" stroke-width="0.6"/></svg>
<svg class="ab" style="left:404.6px;top:195px" width="8" height="8.5"><path d="M0.5 1.5H6M0.5 4H7.5M0.5 6.5H4" stroke="#8c949c" stroke-width="0.8"/></svg>
<svg class="ab" style="left:414.5px;top:195px" width="8" height="8.5"><path d="M0.5 2.5H4.5M0.5 5H3.5M4 5H7.5M6 3.5L7.5 5L6 6.5" fill="none" stroke="#8c949c" stroke-width="0.8"/></svg>
<svg class="ab" style="left:425.4px;top:195px" width="8" height="8.5"><path d="M1 0.5H5.5L7 2V7.5H1z" fill="none" stroke="#8c949c" stroke-width="0.8"/><path d="M2.5 3.5H5.5M2.5 5.5H5.5" stroke="#8c949c" stroke-width="0.6"/></svg>
<svg class="ab" style="left:436.3px;top:195px" width="8" height="8.5"><rect x="0.5" y="0.5" width="3" height="3" fill="none" stroke="#8c949c" stroke-width="0.7"/><rect x="4.5" y="0.5" width="3" height="3" fill="none" stroke="#8c949c" stroke-width="0.7"/><rect x="0.5" y="4.5" width="3" height="3" fill="none" stroke="#8c949c" stroke-width="0.7"/><rect x="4.5" y="4.5" width="3" height="3" fill="none" stroke="#8c949c" stroke-width="0.7"/></svg>
<svg class="ab" style="left:447.2px;top:195px" width="8" height="8.5"><rect x="0.5" y="1" width="7" height="5.5" fill="none" stroke="#8c949c" stroke-width="0.8"/><path d="M4 5V2M2.8 3.2L4 2L5.2 3.2" fill="none" stroke="#8c949c" stroke-width="0.7"/><path d="M1 7.5H7" stroke="#8c949c" stroke-width="0.8"/></svg>
<svg class="ab" style="left:457.7px;top:195px" width="8" height="8.5"><circle cx="4" cy="2.2" r="1.7" fill="#5a6068"/><path d="M0.8 7.5Q0.8 4.5 4 4.5Q7.2 4.5 7.2 7.5z" fill="#5a6068"/></svg>
<svg class="ab" style="left:468.6px;top:195px" width="8" height="8.5"><rect x="2" y="0.8" width="4" height="6.8" rx="0.8" fill="none" stroke="#8c949c" stroke-width="0.8"/></svg>
<svg class="ab" style="left:479.3px;top:195px" width="8" height="8.5"><rect x="0.5" y="0.8" width="7" height="6.5" fill="none" stroke="#8c949c" stroke-width="0.8"/><path d="M2.5 2.8H5.5M4 2.8V5.5" stroke="#8c949c" stroke-width="0.7"/></svg>
<div class="ab" style="left:189px;top:205px;width:266px;height:14.5px;background:#f8f8f8;border-bottom:1px solid #d8d8d8"></div>
<div class="ab" style="left:201.4px;top:205px;width:1px;height:14px;background:#dedede"></div>
<div class="ab" style="left:355px;top:205px;width:1px;height:14px;background:#dedede"></div>
<div class="ab" style="left:403.7px;top:205px;width:1px;height:14px;background:#dedede"></div>
<div class="t" style="left:191.5px;top:207.7px;font-size:4.45px;color:#222">ID</div>
<div class="t" style="left:257.3px;top:207.7px;font-size:4.45px;color:#222">Название работы</div>
<div class="t" style="left:357.3px;top:207.7px;font-size:4.45px;color:#222">Предш. элементы</div>
<div class="t" style="left:413.4px;top:207.7px;font-size:4.45px;color:#222">Начало (план)</div>
<div class="ab" style="left:455px;top:205px;width:6.5px;height:231px;background:#c4c4c4"></div>
<div class="ab" style="left:455px;top:205px;width:6.5px;height:8px;background:#f4f4f4"></div>
<svg class="ab" style="left:456px;top:207px" width="5" height="3"><path d="M0.5 2.5L2.5 0.5L4.5 2.5z" fill="#555"/></svg>
<div class="ab" style="left:461.5px;top:205px;width:195px;height:14.5px;background:#f6f6f6"></div>
<div class="ab" style="left:461.5px;top:212px;width:195px;height:0;border-top:1px solid #dcdcdc"></div>
<div class="ab" style="left:461.5px;top:219px;width:195px;height:0;border-top:1px solid #d4d4d4"></div>
<div class="t" style="left:463px;top:206.8px;font-size:4.5px;color:#444">023</div>
<div class="ab" style="left:461.8px;top:212.5px;width:1px;height:7px;background:#d4d4d4"></div>
<div class="ab" style="left:625px;top:205px;width:1px;height:7px;background:#dcdcdc"></div>
<div class="t" style="left:627px;top:207.3px;font-size:3.75px;color:#444">Август 2023</div>
<div class="ab" style="left:461.5px;top:219.5px;width:195px;height:217px;background:#fff"></div>
<div class="ab" style="left:488.99px;top:219.5px;width:11.31px;height:217px;background:#e6e6e6"></div>
<div class="ab" style="left:528.59px;top:219.5px;width:11.31px;height:217px;background:#e6e6e6"></div>
<div class="ab" style="left:568.19px;top:219.5px;width:11.31px;height:217px;background:#e6e6e6"></div>
<div class="ab" style="left:607.79px;top:219.5px;width:11.31px;height:217px;background:#e6e6e6"></div>
<div class="ab" style="left:647.39px;top:219.5px;width:11.31px;height:217px;background:#e6e6e6"></div>
<div class="t" style="left:462.8px;top:215px;font-size:4.5px;color:#444">3</div>
<div class="ab" style="left:500.30px;top:212.5px;width:1px;height:7px;background:#d4d4d4"></div>
<div class="ab" style="left:500.30px;top:219.5px;width:1px;height:217px;background:#b8d4ee"></div>
<div class="t" style="left:501.80px;top:215px;font-size:4.5px;color:#444">10</div>
<div class="ab" style="left:539.90px;top:212.5px;width:1px;height:7px;background:#d4d4d4"></div>
<div class="ab" style="left:539.90px;top:219.5px;width:1px;height:217px;background:#b8d4ee"></div>
<div class="t" style="left:541.40px;top:215px;font-size:4.5px;color:#444">17</div>
<div class="ab" style="left:579.50px;top:212.5px;width:1px;height:7px;background:#d4d4d4"></div>
<div class="ab" style="left:579.50px;top:219.5px;width:1px;height:217px;background:#b8d4ee"></div>
<div class="t" style="left:581.00px;top:215px;font-size:4.5px;color:#444">24</div>
<div class="ab" style="left:619.10px;top:212.5px;width:1px;height:7px;background:#d4d4d4"></div>
<div class="ab" style="left:619.10px;top:219.5px;width:1px;height:217px;background:#b8d4ee"></div>
<div class="t" style="left:620.60px;top:215px;font-size:4.5px;color:#444">31</div>
<div class="ab" style="left:658.70px;top:212.5px;width:1px;height:7px;background:#d4d4d4"></div>
<div class="ab" style="left:658.70px;top:219.5px;width:1px;height:217px;background:#b8d4ee"></div>
<div class="t" style="left:660.20px;top:215px;font-size:4.5px;color:#444">7</div>
<div class="ab" style="left:534.2px;top:219.5px;width:5.6px;height:217px;background:#a8c6f0"></div>
<div class="ab" style="left:455px;top:213px;width:6.5px;height:223px;background:#eeeeee"></div>
<div class="ab" style="left:455.3px;top:213px;width:6px;height:115px;background:#c2c2c2"></div>
<div class="t gr" style="left:192px;top:221.1px;color:#222">1</div>
<svg class="ab" style="left:202.3px;top:221.2px" width="5" height="5"><path d="M4.5 0.5V4.5H0.5z" fill="#333"/></svg>
<div class="t g" style="left:213.7px;top:220.29999999999998px;color:#282828">[23.009.П], Здание цеха по</div>
<div class="t g" style="left:213.7px;top:227.79999999999998px;color:#282828">производству подшипников (ВКС)</div>
<div class="t gr" style="left:358.5px;top:221.1px;color:#222">Нет</div>
<div class="t gr" style="left:406.6px;top:221.1px;color:#222">16.03.2023</div>
<div class="t gr" style="left:192px;top:245.1px;color:#222">2</div>
<svg class="ab" style="left:206.3px;top:245.2px" width="5" height="5"><path d="M4.5 0.5V4.5H0.5z" fill="#333"/></svg>
<div class="t g" style="left:216.7px;top:244.29999999999998px;color:#282828">Проектная документация</div>
<div class="t gr" style="left:358.5px;top:245.1px;color:#222">Нет</div>
<div class="t gr" style="left:406.6px;top:245.1px;color:#222">16.03.2023</div>
<div class="t gr" style="left:192px;top:269.09999999999997px;color:#222">3</div>
<svg class="ab" style="left:211.6px;top:267.9px" width="5" height="6"><path d="M0.5 0.5L4 3L0.5 5.5z" fill="none" stroke="#c8c8c8" stroke-width="0.7"/></svg>
<div class="t g" style="left:222px;top:268.3px;color:#282828">23.009.П-ПЗ Раздел 1</div>
<div class="t g" style="left:222px;top:275.8px;color:#282828">"Пояснительная записка в формате</div>
<div class="t g" style="left:222px;top:283.3px;color:#282828">XML</div>
<div class="t gr" style="left:358.5px;top:269.09999999999997px;color:#222">Нет</div>
<div class="t gr" style="left:406.6px;top:269.09999999999997px;color:#222">26.04.2023</div>
<div class="t gr" style="left:192px;top:293.09999999999997px;color:#222">6</div>
<svg class="ab" style="left:211.6px;top:291.9px" width="5" height="6"><path d="M0.5 0.5L4 3L0.5 5.5z" fill="none" stroke="#c8c8c8" stroke-width="0.7"/></svg>
<div class="t g" style="left:222px;top:292.3px;color:#282828">23.009.П-ПЗУ Раздел 2 "Схема</div>
<div class="t g" style="left:222px;top:299.8px;color:#282828">планировочной организации</div>
<div class="t g" style="left:222px;top:307.3px;color:#282828">земельного участка" (изм. №1)</div>
<div class="t gr" style="left:358.5px;top:293.09999999999997px;color:#222">Нет</div>
<div class="t gr" style="left:406.6px;top:293.09999999999997px;color:#222">16.03.2023</div>
<div class="ab" style="left:189px;top:314.7px;width:265px;height:24px;background:#57a8f6"></div>
<div class="ab" style="left:461.5px;top:315.0px;width:195px;height:24.5px;border-top:1px solid #f0dccf;border-bottom:1px solid #f0dccf"></div>
<div class="t gr" style="left:192px;top:317.09999999999997px;color:#eef4fc">9</div>
<svg class="ab" style="left:211.6px;top:315.9px" width="5" height="6"><path d="M0.5 0.5L4 3L0.5 5.5z" fill="none" stroke="#9ac4f0" stroke-width="0.7"/></svg>
<div class="t g" style="left:222px;top:316.3px;color:#f4f8ff">23.009.П-АР Раздел 3</div>
<div class="t g" style="left:222px;top:323.8px;color:#f4f8ff">"Архитектурные решения"</div>
<div class="t gr" style="left:358.5px;top:317.09999999999997px;color:#eef4fc">Нет</div>
<div class="t gr" style="left:406.6px;top:317.09999999999997px;color:#eef4fc">14.07.2023</div>
<div class="t gr" style="left:192px;top:341.09999999999997px;color:#222">14</div>
<svg class="ab" style="left:211.6px;top:339.9px" width="5" height="6"><path d="M0.5 0.5L4 3L0.5 5.5z" fill="none" stroke="#c8c8c8" stroke-width="0.7"/></svg>
<div class="t g" style="left:222px;top:340.3px;color:#282828">23.009.П-КР Раздел 4</div>
<div class="t g" style="left:222px;top:347.8px;color:#282828">"Конструктивные и объемно-</div>
<div class="t g" style="left:222px;top:355.3px;color:#282828">планировочные решения"</div>
<div class="t gr" style="left:358.5px;top:341.09999999999997px;color:#222">Нет</div>
<div class="t gr" style="left:406.6px;top:341.09999999999997px;color:#222">14.07.2023</div>
<div class="t gr" style="left:192px;top:365.09999999999997px;color:#222">18</div>
<svg class="ab" style="left:211.6px;top:363.9px" width="5" height="6"><path d="M0.5 0.5L4 3L0.5 5.5z" fill="none" stroke="#c8c8c8" stroke-width="0.7"/></svg>
<div class="t g" style="left:222px;top:364.3px;color:#282828">23.009.П-ИОС Раздел 5 "Сведения об</div>
<div class="t g" style="left:222px;top:371.8px;color:#282828">инженерном оборудовании, о сетях</div>
<div class="t g" style="left:222px;top:379.3px;color:#282828">инженерно-технического</div>
<div class="t gr" style="left:358.5px;top:365.09999999999997px;color:#222">Нет</div>
<div class="t gr" style="left:406.6px;top:365.09999999999997px;color:#222">14.07.2023</div>
<div class="t gr" style="left:192px;top:389.09999999999997px;color:#222">50</div>
<svg class="ab" style="left:211.6px;top:387.9px" width="5" height="6"><path d="M0.5 0.5L4 3L0.5 5.5z" fill="none" stroke="#c8c8c8" stroke-width="0.7"/></svg>
<div class="t g" style="left:222px;top:388.3px;color:#282828">23.009.П-СМ Раздел 12 "Смета на</div>
<div class="t g" style="left:222px;top:395.8px;color:#282828">строительство объектов</div>
<div class="t g" style="left:222px;top:403.3px;color:#282828">капитального строительства"</div>
<div class="t gr" style="left:358.5px;top:389.09999999999997px;color:#222">Нет</div>
<div class="t gr" style="left:406.6px;top:389.09999999999997px;color:#222">17.07.2023</div>
<div class="t gr" style="left:192px;top:413.09999999999997px;color:#222">61</div>
<svg class="ab" style="left:211.6px;top:411.9px" width="5" height="6"><path d="M0.5 0.5L4 3L0.5 5.5z" fill="none" stroke="#c8c8c8" stroke-width="0.7"/></svg>
<div class="t g" style="left:222px;top:412.3px;color:#282828">23.009.П-ТХ Раздел 6</div>
<div class="t g" style="left:222px;top:419.8px;color:#282828">"Технологические решения" с</div>
<div class="t g" style="left:222px;top:427.3px;color:#282828">ашипкой</div>
<div class="t gr" style="left:358.5px;top:413.09999999999997px;color:#222">Нет</div>
<div class="t gr" style="left:406.6px;top:413.09999999999997px;color:#222">18.07.2023</div>
<div class="ab" style="left:462px;top:228.29999999999998px;width:195px;height:3.5px;background:#5c7896"></div>
<div class="ab" style="left:462px;top:252.29999999999998px;width:195px;height:3.5px;background:#5c7896"></div>
<div class="ab" style="left:522.9px;top:324.2px;width:45.39999999999998px;height:3.5px;background:#5c7896"></div>
<svg class="ab" style="left:522.9px;top:327.2px" width="3" height="3"><path d="M0 0H3L0 3z" fill="#5c7896"/></svg>
<svg class="ab" style="left:565.3px;top:327.2px" width="3" height="3"><path d="M0 0H3V3z" fill="#5c7896"/></svg>
<div class="ab" style="left:522.9px;top:348.3px;width:28.399999999999977px;height:3.5px;background:#5c7896"></div>
<svg class="ab" style="left:522.9px;top:351.3px" width="3" height="3"><path d="M0 0H3L0 3z" fill="#5c7896"/></svg>
<svg class="ab" style="left:548.3px;top:351.3px" width="3" height="3"><path d="M0 0H3V3z" fill="#5c7896"/></svg>
<div class="ab" style="left:522.9px;top:372.3px;width:134.10000000000002px;height:3.5px;background:#5c7896"></div>
<svg class="ab" style="left:522.9px;top:375.3px" width="3" height="3"><path d="M0 0H3L0 3z" fill="#5c7896"/></svg>
<div class="ab" style="left:539.9px;top:396.3px;width:117.10000000000002px;height:3.5px;background:#5c7896"></div>
<svg class="ab" style="left:539.9px;top:399.3px" width="3" height="3"><path d="M0 0H3L0 3z" fill="#5c7896"/></svg>
<div class="ab" style="left:545.6px;top:420.3px;width:111.39999999999998px;height:3.5px;background:#5c7896"></div>
<svg class="ab" style="left:545.6px;top:423.3px" width="3" height="3"><path d="M0 0H3L0 3z" fill="#5c7896"/></svg>
<svg class="ab" style="left:456.5px;top:432.5px" width="4" height="3"><path d="M0.3 0.5H3.7L2 2.5z" fill="#777"/></svg>
</body></html>
